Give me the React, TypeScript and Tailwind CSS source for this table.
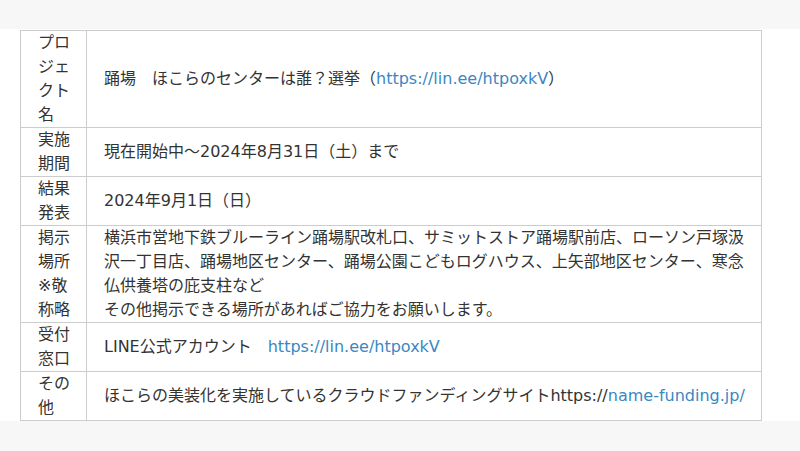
export default function App() {
  const font = { fontFamily: '"DejaVu Sans", "Noto Sans CJK JP", sans-serif' };
  const th = "border border-[#cccccc] w-[66px] min-w-[66px] max-w-[66px] pl-[17px] pr-[10px] py-0 align-middle font-normal";
  const td = "border border-[#cccccc] pl-[17px] pr-[15px] py-0 text-left align-middle";
  const link = "text-[#3b87c2]";
  const H = ({ children }: { children: string }) => (
    <th className={th}>
      <div className="w-[38px] text-left">{children}</div>
    </th>
  );
  return (
    <div className="w-[800px] h-[451px] bg-[#f7f7f7] text-[#333333] text-[16px] leading-[24px]" style={font}>
      <div className="h-[29px]" />
      <div className="bg-white pt-[1px] pb-0">
        <table className="ml-[20px] w-[742px] border-collapse">
          <tbody>
            <tr>
              <H>プロジェクト名</H>
              <td className={td}>
                踊場　ほこらのセンターは誰？選挙（<span className={link}>https://lin.ee/htpoxkV</span>）
              </td>
            </tr>
            <tr>
              <H>実施期間</H>
              <td className={td}>現在開始中〜2024年8月31日（土）まで</td>
            </tr>
            <tr>
              <H>結果発表</H>
              <td className={td}>2024年9月1日（日）</td>
            </tr>
            <tr>
              <H>掲示場所※敬称略</H>
              <td className={td}>
                横浜市営地下鉄ブルーライン踊場駅改札口、サミットストア踊場駅前店、ローソン戸塚汲沢一丁目店、踊場地区センター、踊場公園こどもログハウス、上矢部地区センター、寒念仏供養塔の庇支柱など
                <br />
                その他掲示できる場所があればご協力をお願いします。
              </td>
            </tr>
            <tr>
              <H>受付窓口</H>
              <td className={td}>
                LINE公式アカウント　<span className={link}>https://lin.ee/htpoxkV</span>
              </td>
            </tr>
            <tr>
              <H>その他</H>
              <td className={td}>
                ほこらの美装化を実施しているクラウドファンディングサイトhttps://<span className={link}>name-funding.jp/</span>
              </td>
            </tr>
          </tbody>
        </table>
      </div>
    </div>
  );
}
